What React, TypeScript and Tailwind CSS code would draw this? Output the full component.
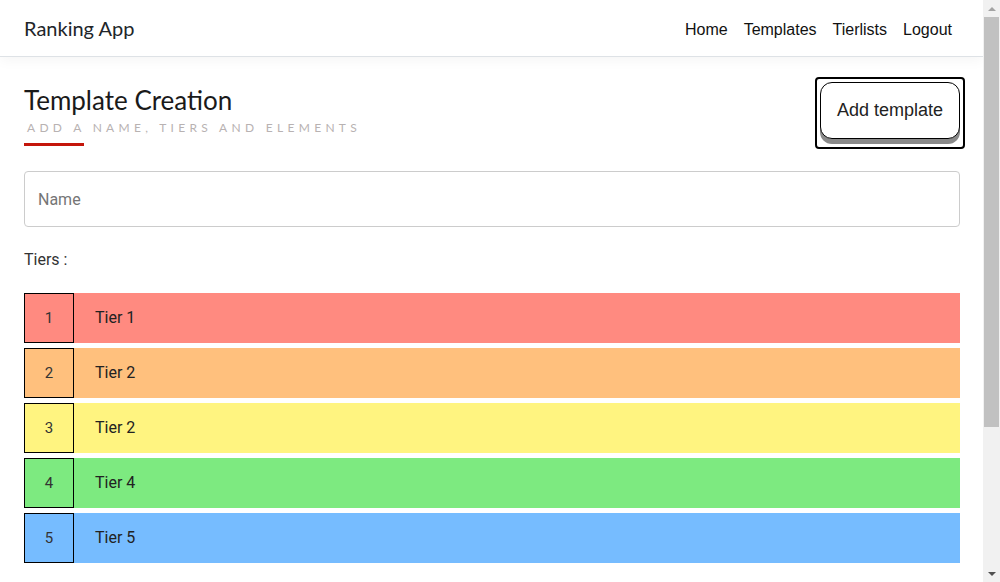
import React from "react";

const tiers = [
  { rank: 1, label: "Tier 1", color: "bg-[#ff8a80]" },
  { rank: 2, label: "Tier 2", color: "bg-[#ffc07d]" },
  { rank: 3, label: "Tier 2", color: "bg-[#fff480]" },
  { rank: 4, label: "Tier 4", color: "bg-[#7dea80]" },
  { rank: 5, label: "Tier 5", color: "bg-[#76bcff]" },
];

function Navbar() {
  return (
    <nav className="h-[57px] bg-white border-b border-[#dee2e6] shadow-[0_4px_12px_rgba(0,0,0,0.04)] flex items-center justify-between pl-6 pr-[23px]">
      <span className="text-[20px] text-[#212529] font-['Lato',sans-serif]">Ranking App</span>
      <ul className="mt-[3px] flex items-center font-['Liberation_Sans',sans-serif] text-[16px] text-[#111]">
        {["Home", "Templates", "Tierlists", "Logout"].map((link) => (
          <li key={link}>
            <a className="px-2 py-2 block cursor-pointer">{link}</a>
          </li>
        ))}
      </ul>
    </nav>
  );
}

function TierRow({ rank, label, color }: { rank: number; label: string; color: string }) {
  return (
    <div className={`flex h-[50px] items-center ${color}`}>
      <div className="w-[50px] h-[50px] border border-black flex items-center justify-center text-[15px] text-[#333]">
        {rank}
      </div>
      <span className="ml-[21px] text-[16px] text-[#222]">{label}</span>
    </div>
  );
}

// the window scrollbar of the screenshot
function Scrollbar() {
  return (
    <div className="w-[17px] shrink-0 bg-[#f1f1f1] flex flex-col items-center">
      <div className="h-[17px] flex items-center justify-center">
        <div className="w-0 h-0 border-x-[4px] border-x-transparent border-b-[4px] border-b-[#a3a3a3]" />
      </div>
      <div className="w-[15px] h-[410px] bg-[#c1c1c1]" />
      <div className="flex-1" />
      <div className="h-[17px] flex items-center justify-center">
        <div className="w-0 h-0 border-x-[4px] border-x-transparent border-t-[4px] border-t-[#505050]" />
      </div>
    </div>
  );
}

export default function App() {
  return (
    <div className="h-[582px] flex overflow-hidden bg-white font-['Roboto',sans-serif]">
      <div className="flex-1 min-w-0">
        <Navbar />
        <main className="pl-6 pr-[23px] pt-[20px]">
          <div className="flex items-start justify-between">
            <div className="pt-[7px]">
              <h1 className="text-[26px] leading-[32px] text-[#1a1a1a] font-['Lato',sans-serif]">Template Creation</h1>
              <p className="mt-[3px] pl-[3px] text-[12px] tracking-[4.3px] text-[#b8b2b2] font-['Lato',sans-serif]">
                ADD A NAME, TIERS AND ELEMENTS
              </p>
              <div className="mt-[6px] w-[60px] h-[3px] bg-[#c4160b]" />
            </div>
            <div className="mr-[-5px] border-2 border-black rounded-[4px] p-[3px] pb-[8px]">
              <button className="w-[140px] h-[57px] bg-white border border-black rounded-[12px] shadow-[0_5px_0_#8a8a8a] text-[18px] text-[#222] font-['Liberation_Sans',sans-serif]">
                Add template
              </button>
            </div>
          </div>

          <input
            placeholder="Name"
            className="mt-[22px] w-full h-[56px] border border-[#ccc] rounded-[4px] px-[13px] text-[16px] placeholder:text-[#757575] outline-none"
          />

          <p className="mt-[21px] text-[16px] text-[#333]">Tiers :</p>

          <div className="mt-[21px] flex flex-col gap-[5px]">
            {tiers.map((t) => (
              <TierRow key={t.rank} {...t} />
            ))}
          </div>
        </main>
      </div>
      <Scrollbar />
    </div>
  );
}
